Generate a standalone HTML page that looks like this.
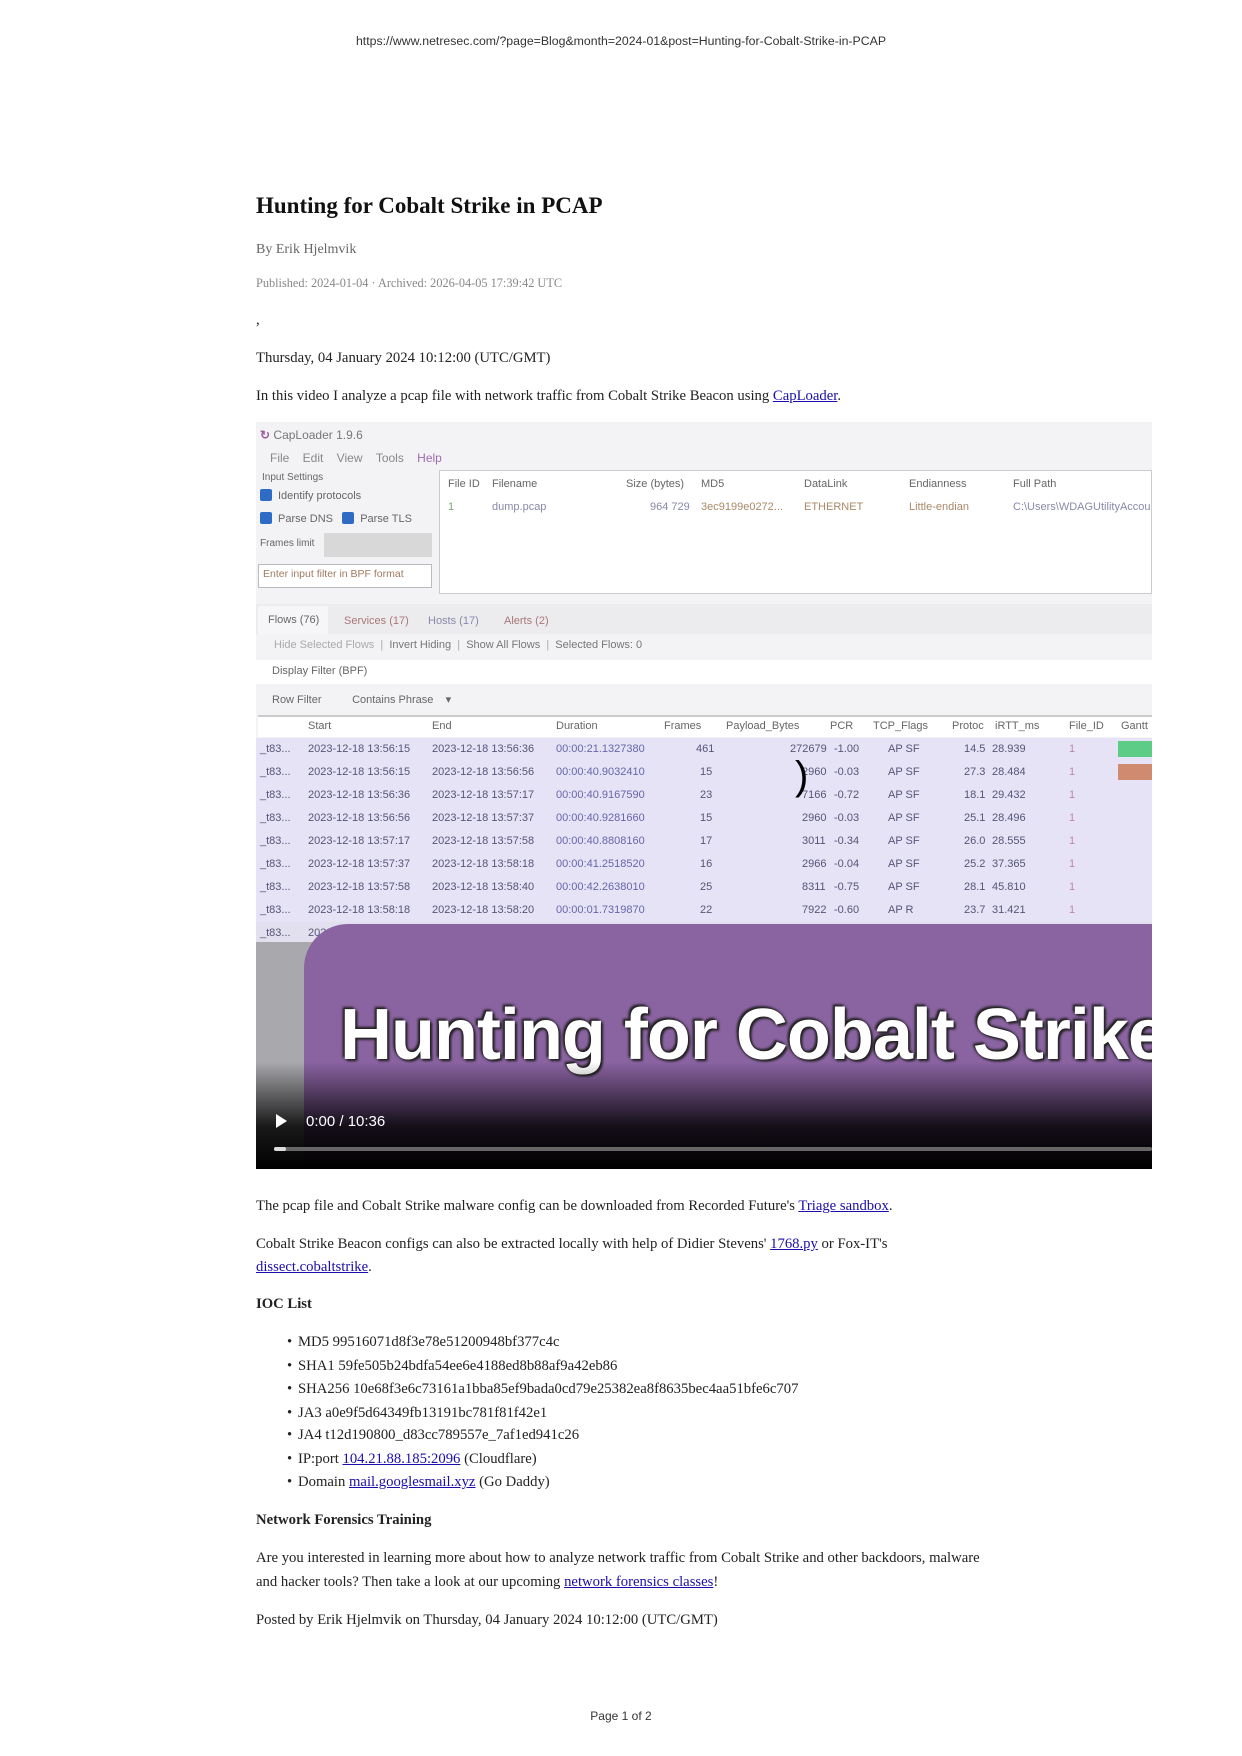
<!DOCTYPE html>
<html><head><meta charset="utf-8"><style>
*{margin:0;padding:0;box-sizing:border-box}
body{width:1242px;height:1756px;background:#fff;position:relative;font-family:"Liberation Serif",serif;color:#222;overflow:hidden}
.t{position:absolute;white-space:nowrap;font-size:14.7px;line-height:18px}
a{color:#1a0dab;text-decoration:underline}
.g{color:#666}
.v{position:absolute;left:256px;top:422px;width:896px;height:747px;background:#f3f3f5;overflow:hidden;font-family:"Liberation Sans",sans-serif;color:#666;font-size:11px}
.v .a{position:absolute;white-space:nowrap}
.cb{display:inline-block;width:12px;height:12px;background:#2d6bc4;border-radius:2px;vertical-align:-2px;margin-right:6px}
.row{position:absolute;left:0;width:896px;height:23px;background:#e6e3f6}
.row span{position:absolute;top:5px;color:#557;font-size:11px}
.b{position:absolute;left:287px}
</style></head><body>
<div class="t" style="left:0;width:1242px;text-align:center;top:32px;font-family:'Liberation Sans',sans-serif;font-size:12.3px;color:#333">https://www.netresec.com/?page=Blog&amp;month=2024-01&amp;post=Hunting-for-Cobalt-Strike-in-PCAP</div>
<div class="t" style="left:256px;top:193px;font-size:23px;line-height:26px;font-weight:bold;color:#111">Hunting for Cobalt Strike in PCAP</div>
<div class="t g" style="left:256px;top:241px;font-size:14px">By Erik Hjelmvik</div>
<div class="t" style="left:256px;top:274px;font-size:12.3px;color:#888">Published: 2024-01-04 · Archived: 2026-04-05 17:39:42 UTC</div>
<div class="t" style="left:256px;top:311px">,</div>
<div class="t" style="left:256px;top:349px">Thursday, 04 January 2024 10:12:00 (UTC/GMT)</div>
<div class="t" style="left:256px;top:387px">In this video I analyze a pcap file with network traffic from Cobalt Strike Beacon using <a>CapLoader</a>.</div>

<div class="v">
 <div class="a" style="left:4px;top:6px;font-size:12px;color:#777"><span style="color:#a05aa0;font-weight:bold">&#x21BB;</span> CapLoader 1.9.6</div>
 <div class="a" style="left:14px;top:29px;font-size:12px;color:#888">File&nbsp;&nbsp;&nbsp;&nbsp;Edit&nbsp;&nbsp;&nbsp;&nbsp;View&nbsp;&nbsp;&nbsp;&nbsp;Tools&nbsp;&nbsp;&nbsp;&nbsp;<span style="color:#a06ab0">Help</span></div>
 <div class="a" style="left:6px;top:50px;font-size:10px">Input Settings</div>
 <div class="a" style="left:4px;top:67px"><span class="cb"></span>Identify protocols</div>
 <div class="a" style="left:4px;top:90px"><span class="cb"></span>Parse DNS&nbsp;&nbsp;&nbsp;<span class="cb"></span>Parse TLS</div>
 <div class="a" style="left:4px;top:116px;font-size:10px">Frames limit</div>
 <div class="a" style="left:68px;top:111px;width:108px;height:24px;background:#d8d8d8"></div>
 <div class="a" style="left:2px;top:142px;width:174px;height:24px;background:#fff;border:1px solid #bbb;padding:3px 4px;font-size:10.5px;color:#a07a60">Enter input filter in BPF format</div>
 <div class="a" style="left:183px;top:48px;width:713px;height:124px;background:#fff;border:1px solid #ccc"></div>
 <div class="a" style="left:192px;top:56px">File ID</div><div class="a" style="left:236px;top:56px">Filename</div><div class="a" style="left:370px;top:56px">Size (bytes)</div><div class="a" style="left:445px;top:56px">MD5</div><div class="a" style="left:548px;top:56px">DataLink</div><div class="a" style="left:653px;top:56px">Endianness</div><div class="a" style="left:757px;top:56px">Full Path</div>
 <div class="a" style="left:192px;top:79px;color:#7a7">1</div><div class="a" style="left:236px;top:79px;color:#88a">dump.pcap</div><div class="a" style="left:394px;top:79px;color:#88a">964 729</div><div class="a" style="left:445px;top:79px;color:#a86">3ec9199e0272...</div><div class="a" style="left:548px;top:79px;color:#a86">ETHERNET</div><div class="a" style="left:653px;top:79px;color:#a86">Little-endian</div><div class="a" style="left:757px;top:79px;color:#88a">C:\Users\WDAGUtilityAccou</div>
 <div class="a" style="left:0;top:182px;width:896px;height:30px;background:#ececef"></div>
 <div class="a" style="left:2px;top:184px;width:70px;height:28px;background:#f6f6f8"></div>
 <div class="a" style="left:12px;top:192px">Flows (76)</div><div class="a" style="left:88px;top:193px;color:#a77">Services (17)</div><div class="a" style="left:172px;top:193px;color:#88a">Hosts (17)</div><div class="a" style="left:248px;top:193px;color:#a77">Alerts (2)</div>
 <div class="a" style="left:18px;top:217px;color:#aaa">Hide Selected Flows&nbsp;&nbsp;|&nbsp;&nbsp;<span style="color:#777">Invert Hiding</span>&nbsp;&nbsp;|&nbsp;&nbsp;<span style="color:#777">Show All Flows</span>&nbsp;&nbsp;|&nbsp;&nbsp;<span style="color:#777">Selected Flows: 0</span></div>
 <div class="a" style="left:0;top:238px;width:896px;height:24px;background:#fff"></div>
 <div class="a" style="left:16px;top:243px">Display Filter (BPF)</div>
 <div class="a" style="left:16px;top:271px">Row Filter&nbsp;&nbsp;&nbsp;&nbsp;&nbsp;&nbsp;&nbsp;&nbsp;&nbsp;&nbsp;Contains Phrase&nbsp;&nbsp;&nbsp;&nbsp;▾</div>
 <div class="a" style="left:2px;top:293px;width:894px;height:22px;background:#fff;border-top:2px solid #ccc"></div>
 <div class="a" style="left:52px;top:298px">Start</div><div class="a" style="left:176px;top:298px">End</div><div class="a" style="left:300px;top:298px">Duration</div><div class="a" style="left:408px;top:298px">Frames</div><div class="a" style="left:470px;top:298px">Payload_Bytes</div><div class="a" style="left:574px;top:298px">PCR</div><div class="a" style="left:617px;top:298px">TCP_Flags</div><div class="a" style="left:696px;top:298px">Protoc</div><div class="a" style="left:739px;top:298px">iRTT_ms</div><div class="a" style="left:813px;top:298px">File_ID</div><div class="a" style="left:865px;top:298px">Gantt</div>
 <div class="row" style="top:316px"><span style="left:4px">_t83...</span><span style="left:52px">2023-12-18 13:56:15</span><span style="left:176px">2023-12-18 13:56:36</span><span style="left:300px;color:#66a">00:00:21.1327380</span><span style="left:440px">461</span><span style="left:534px">272679</span><span style="left:578px">-1.00</span><span style="left:632px">AP SF</span><span style="left:708px">14.5</span><span style="left:736px">28.939</span><span style="left:813px;color:#b8a">1</span><span style="left:862px;top:3px;width:34px;height:16px;background:#5dcc86"></span></div>
 <div class="row" style="top:339px"><span style="left:4px">_t83...</span><span style="left:52px">2023-12-18 13:56:15</span><span style="left:176px">2023-12-18 13:56:56</span><span style="left:300px;color:#66a">00:00:40.9032410</span><span style="left:444px">15</span><span style="left:546px">2960</span><span style="left:578px">-0.03</span><span style="left:632px">AP SF</span><span style="left:708px">27.3</span><span style="left:736px">28.484</span><span style="left:813px;color:#b8a">1</span><span style="left:862px;top:3px;width:34px;height:16px;background:#cf8a70"></span></div>
 <div class="row" style="top:362px"><span style="left:4px">_t83...</span><span style="left:52px">2023-12-18 13:56:36</span><span style="left:176px">2023-12-18 13:57:17</span><span style="left:300px;color:#66a">00:00:40.9167590</span><span style="left:444px">23</span><span style="left:546px">7166</span><span style="left:578px">-0.72</span><span style="left:632px">AP SF</span><span style="left:708px">18.1</span><span style="left:736px">29.432</span><span style="left:813px;color:#b8a">1</span></div>
 <div class="row" style="top:385px"><span style="left:4px">_t83...</span><span style="left:52px">2023-12-18 13:56:56</span><span style="left:176px">2023-12-18 13:57:37</span><span style="left:300px;color:#66a">00:00:40.9281660</span><span style="left:444px">15</span><span style="left:546px">2960</span><span style="left:578px">-0.03</span><span style="left:632px">AP SF</span><span style="left:708px">25.1</span><span style="left:736px">28.496</span><span style="left:813px;color:#b8a">1</span></div>
 <div class="row" style="top:408px"><span style="left:4px">_t83...</span><span style="left:52px">2023-12-18 13:57:17</span><span style="left:176px">2023-12-18 13:57:58</span><span style="left:300px;color:#66a">00:00:40.8808160</span><span style="left:444px">17</span><span style="left:546px">3011</span><span style="left:578px">-0.34</span><span style="left:632px">AP SF</span><span style="left:708px">26.0</span><span style="left:736px">28.555</span><span style="left:813px;color:#b8a">1</span></div>
 <div class="row" style="top:431px"><span style="left:4px">_t83...</span><span style="left:52px">2023-12-18 13:57:37</span><span style="left:176px">2023-12-18 13:58:18</span><span style="left:300px;color:#66a">00:00:41.2518520</span><span style="left:444px">16</span><span style="left:546px">2966</span><span style="left:578px">-0.04</span><span style="left:632px">AP SF</span><span style="left:708px">25.2</span><span style="left:736px">37.365</span><span style="left:813px;color:#b8a">1</span></div>
 <div class="row" style="top:454px"><span style="left:4px">_t83...</span><span style="left:52px">2023-12-18 13:57:58</span><span style="left:176px">2023-12-18 13:58:40</span><span style="left:300px;color:#66a">00:00:42.2638010</span><span style="left:444px">25</span><span style="left:546px">8311</span><span style="left:578px">-0.75</span><span style="left:632px">AP SF</span><span style="left:708px">28.1</span><span style="left:736px">45.810</span><span style="left:813px;color:#b8a">1</span></div>
 <div class="row" style="top:477px"><span style="left:4px">_t83...</span><span style="left:52px">2023-12-18 13:58:18</span><span style="left:176px">2023-12-18 13:58:20</span><span style="left:300px;color:#66a">00:00:01.7319870</span><span style="left:444px">22</span><span style="left:546px">7922</span><span style="left:578px">-0.60</span><span style="left:632px">AP R</span><span style="left:708px">23.7</span><span style="left:736px">31.421</span><span style="left:813px;color:#b8a">1</span></div>
 <div class="row" style="top:500px;background:#e2e0ee"><span style="left:4px">_t83...</span><span style="left:52px">2023-</span></div>
 <div class="a" style="left:0;top:520px;width:896px;height:227px;background:#a9a9ad"></div>
 <div class="a" style="left:48px;top:502px;width:900px;height:300px;background:#8a63a1;border-radius:44px 0 0 0"></div>
 <div class="a" style="left:539px;top:332px;font-size:40px;font-weight:300;color:#000">)</div>
 <div class="a" style="left:84px;top:572px;font-size:72px;font-weight:bold;color:#fff;letter-spacing:-1px;font-family:'Liberation Sans',sans-serif;text-shadow:0 0 3px #222,2px 2px 2px #222,-2px -2px 2px #222">Hunting for Cobalt Strike</div>
 <div class="a" style="left:0;top:640px;width:896px;height:107px;background:linear-gradient(rgba(0,0,0,0),rgba(0,0,0,.85) 60%,#000)"></div>
 <div class="a" style="left:20px;top:692px;width:0;height:0;border-left:11px solid #fff;border-top:7px solid transparent;border-bottom:7px solid transparent"></div>
 <div class="a" style="left:50px;top:691px;font-size:15px;color:#fff">0:00 / 10:36</div>
 <div class="a" style="left:18px;top:725px;width:878px;height:4px;background:#666;border-radius:2px"></div>
 <div class="a" style="left:18px;top:725px;width:12px;height:4px;background:#ddd;border-radius:2px"></div>
</div>

<div class="t" style="left:256px;top:1197px">The pcap file and Cobalt Strike malware config can be downloaded from Recorded Future's <a>Triage sandbox</a>.</div>
<div class="t" style="left:256px;top:1235px">Cobalt Strike Beacon configs can also be extracted locally with help of Didier Stevens' <a>1768.py</a> or Fox-IT's</div>
<div class="t" style="left:256px;top:1258px"><a>dissect.cobaltstrike</a>.</div>
<div class="t" style="left:256px;top:1295px;font-weight:bold">IOC List</div>
<div class="t b" style="top:1333px">•</div><div class="t" style="left:298px;top:1333px">MD5 99516071d8f3e78e51200948bf377c4c</div>
<div class="t b" style="top:1357px">•</div><div class="t" style="left:298px;top:1357px">SHA1 59fe505b24bdfa54ee6e4188ed8b88af9a42eb86</div>
<div class="t b" style="top:1380px">•</div><div class="t" style="left:298px;top:1380px">SHA256 10e68f3e6c73161a1bba85ef9bada0cd79e25382ea8f8635bec4aa51bfe6c707</div>
<div class="t b" style="top:1404px">•</div><div class="t" style="left:298px;top:1404px">JA3 a0e9f5d64349fb13191bc781f81f42e1</div>
<div class="t b" style="top:1426px">•</div><div class="t" style="left:298px;top:1426px">JA4 t12d190800_d83cc789557e_7af1ed941c26</div>
<div class="t b" style="top:1450px">•</div><div class="t" style="left:298px;top:1450px">IP:port <a>104.21.88.185:2096</a> (Cloudflare)</div>
<div class="t b" style="top:1473px">•</div><div class="t" style="left:298px;top:1473px">Domain <a>mail.googlesmail.xyz</a> (Go Daddy)</div>
<div class="t" style="left:256px;top:1511px;font-weight:bold">Network Forensics Training</div>
<div class="t" style="left:256px;top:1549px">Are you interested in learning more about how to analyze network traffic from Cobalt Strike and other backdoors, malware</div>
<div class="t" style="left:256px;top:1573px">and hacker tools? Then take a look at our upcoming <a>network forensics classes</a>!</div>
<div class="t" style="left:256px;top:1611px">Posted by Erik Hjelmvik on Thursday, 04 January 2024 10:12:00 (UTC/GMT)</div>
<div class="t" style="left:0;width:1242px;text-align:center;top:1707px;font-family:'Liberation Sans',sans-serif;font-size:12px;color:#333">Page 1 of 2</div>
</body></html>
